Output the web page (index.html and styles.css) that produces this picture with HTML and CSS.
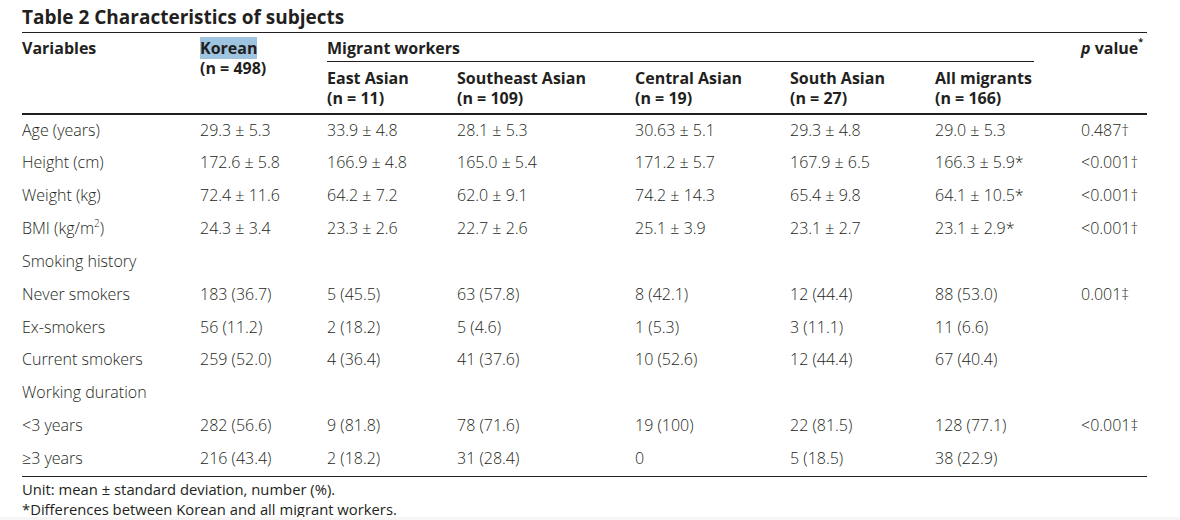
FILE: index.html
```html
<!DOCTYPE html>
<html>
<head>
<meta charset="utf-8">
<link rel="stylesheet" href="styles.css">
</head>
<body>
<div class="page">
  <h1 class="title">Table 2 Characteristics of subjects</h1>
  <table class="tbl">
    <colgroup>
      <col class="c-var"><col class="c-kor"><col class="c-east"><col class="c-se"><col class="c-cen"><col class="c-south"><col class="c-all"><col class="c-p">
    </colgroup>
    <thead>
      <tr class="h1">
        <th rowspan="2" class="hspan">Variables</th>
        <th rowspan="2" class="hspan"><span class="hl">Korean</span><br>(n = 498)</th>
        <th colspan="5" class="mig"><div class="mig-label">Migrant workers</div></th>
        <th rowspan="2" class="hspan pv"><i>p</i> value<sup>*</sup></th>
      </tr>
      <tr class="h2">
        <th>East Asian<br>(n = 11)</th>
        <th>Southeast Asian<br>(n = 109)</th>
        <th>Central Asian<br>(n = 19)</th>
        <th>South Asian<br>(n = 27)</th>
        <th>All migrants<br>(n = 166)</th>
      </tr>
    </thead>
    <tbody>
      <tr><td>Age (years)</td><td>29.3 ± 5.3</td><td>33.9 ± 4.8</td><td>28.1 ± 5.3</td><td>30.63 ± 5.1</td><td>29.3 ± 4.8</td><td>29.0 ± 5.3</td><td>0.487†</td></tr>
      <tr><td>Height (cm)</td><td>172.6 ± 5.8</td><td>166.9 ± 4.8</td><td>165.0 ± 5.4</td><td>171.2 ± 5.7</td><td>167.9 ± 6.5</td><td>166.3 ± 5.9*</td><td>&lt;0.001†</td></tr>
      <tr><td>Weight (kg)</td><td>72.4 ± 11.6</td><td>64.2 ± 7.2</td><td>62.0 ± 9.1</td><td>74.2 ± 14.3</td><td>65.4 ± 9.8</td><td>64.1 ± 10.5*</td><td>&lt;0.001†</td></tr>
      <tr><td>BMI (kg/m<sup class="sq">2</sup>)</td><td>24.3 ± 3.4</td><td>23.3 ± 2.6</td><td>22.7 ± 2.6</td><td>25.1 ± 3.9</td><td>23.1 ± 2.7</td><td>23.1 ± 2.9*</td><td>&lt;0.001†</td></tr>
      <tr><td>Smoking history</td><td></td><td></td><td></td><td></td><td></td><td></td><td></td></tr>
      <tr><td>Never smokers</td><td>183 (36.7)</td><td>5 (45.5)</td><td>63 (57.8)</td><td>8 (42.1)</td><td>12 (44.4)</td><td>88 (53.0)</td><td>0.001‡</td></tr>
      <tr><td>Ex-smokers</td><td>56 (11.2)</td><td>2 (18.2)</td><td>5 (4.6)</td><td>1 (5.3)</td><td>3 (11.1)</td><td>11 (6.6)</td><td></td></tr>
      <tr><td>Current smokers</td><td>259 (52.0)</td><td>4 (36.4)</td><td>41 (37.6)</td><td>10 (52.6)</td><td>12 (44.4)</td><td>67 (40.4)</td><td></td></tr>
      <tr><td>Working duration</td><td></td><td></td><td></td><td></td><td></td><td></td><td></td></tr>
      <tr><td>&lt;3 years</td><td>282 (56.6)</td><td>9 (81.8)</td><td>78 (71.6)</td><td>19 (100)</td><td>22 (81.5)</td><td>128 (77.1)</td><td>&lt;0.001‡</td></tr>
      <tr><td>≥3 years</td><td>216 (43.4)</td><td>2 (18.2)</td><td>31 (28.4)</td><td>0</td><td>5 (18.5)</td><td>38 (22.9)</td><td></td></tr>
    </tbody>
  </table>
  <div class="notes">
    <p>Unit: mean ± standard deviation, number (%).</p>
    <p>*Differences between Korean and all migrant workers.</p>
  </div>
</div>
<div class="strip"></div>
</body>
</html>
```

FILE: styles.css
```css
html, body {
  margin: 0;
  padding: 0;
  background: #ffffff;
}
body {
  width: 1180px;
  height: 520px;
  overflow: hidden;
  position: relative;
  font-family: "Open Sans", "Noto Sans", sans-serif;
  color: #231f20;
}
.page {
  padding: 0 0 0 22px;
  width: 1125px;
}
.title {
  margin: 0;
  padding-top: 5px;
  height: 27px;
  font-size: 19px;
  line-height: 24px;
  font-weight: 700;
  letter-spacing: 0;
}
.tbl {
  border-collapse: collapse;
  table-layout: fixed;
  width: 1125px;
  border-top: 1px solid #231f20;
  border-bottom: 1px solid #231f20;
}
.c-var { width: 178px; }
.c-kor { width: 127px; }
.c-east { width: 130px; }
.c-se { width: 178px; }
.c-cen { width: 155px; }
.c-south { width: 145px; }
.c-all { width: 146px; }
.c-p { width: 66px; }
th, td {
  padding: 0;
  text-align: left;
  vertical-align: top;
  font-size: 16px;
  line-height: 20px;
}
th {
  font-weight: 700;
}
.h1 th {
  padding-top: 5px;
}
.mig {
  padding: 5px 0 0 0;
}
.mig-label {
  margin-right: 47px;
  padding-bottom: 3px;
  border-bottom: 1px solid #231f20;
}
.h2 th {
  padding: 6px 0 5px 0;
  border-bottom: 2px solid #231f20;
}
.h1 th.hspan {
  border-bottom: 2px solid #231f20;
}
.pv {
  white-space: nowrap;
}
.hl {
  background: #9fc4e0;
}
.pv sup {
  font-size: 9px;
  line-height: 0;
  vertical-align: 9px;
}
td {
  font-weight: 300;
  padding: 4.5px 0 8.35px 0;
  white-space: nowrap;
}
.sq {
  font-size: 10px;
  line-height: 0;
  vertical-align: 7px;
}
.notes {
  padding-top: 2px;
}
.notes p {
  margin: 0;
  font-size: 14.8px;
  line-height: 20px;
}
.strip {
  position: absolute;
  left: 0;
  right: 0;
  bottom: 0;
  height: 3px;
  background: #f6f6f6;
}
```
